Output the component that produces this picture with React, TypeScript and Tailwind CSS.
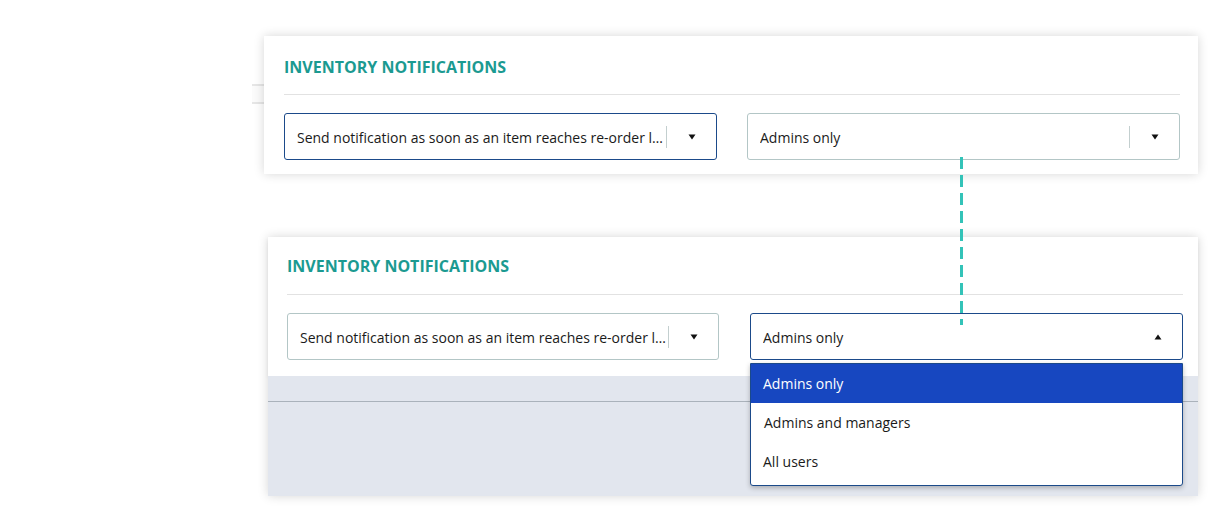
import React from "react";

function Arrow({ up = false }: { up?: boolean }) {
  return (
    <svg width="8" height="6" viewBox="0 0 8 6" className="block">
      {up ? <path d="M4 0.5 L7.5 5.5 L0.5 5.5 Z" fill="#111" /> : <path d="M0.5 0.5 L7.5 0.5 L4 5.5 Z" fill="#111" />}
    </svg>
  );
}

function Select({
  text,
  active = false,
  open = false,
  separator = true,
}: {
  text: string;
  active?: boolean;
  open?: boolean;
  separator?: boolean;
}) {
  return (
    <div
      className={`flex h-[47px] items-center rounded-[3px] border bg-white pl-[12px] ${
        active ? "border-[#1b4a8a]" : "border-[#b3c6c6]"
      }`}
    >
      <span className="min-w-0 flex-1 truncate pt-[2px] text-[14px] leading-[20px] text-[#1a1a1a]">{text}</span>
      <div className="flex w-[50px] shrink-0 items-center">
        <div className={`h-[22px] w-px ${separator ? "bg-[#c3cfcf]" : "bg-transparent"}`} />
        <div className="flex flex-1 justify-center pl-[1px] pt-[1px]">
          <Arrow up={open} />
        </div>
      </div>
    </div>
  );
}

export default function App() {
  const longText = "Send notification as soon as an item reaches re-order level";
  return (
    <div
      className="relative h-[510px] w-[1212px] overflow-hidden bg-white"
      style={{ fontFamily: '"Open Sans", "Noto Sans", sans-serif' }}
    >
      {/* faint background element behind card 1 */}
      <div className="absolute left-[252px] top-[84px] z-0 h-[20px] w-[14px] border-y-2 border-[#e6e6e6] bg-[#fbfbfb]" />

      {/* Card 1 */}
      <div className="relative z-10 ml-[264px] mt-[36px] w-[934px] bg-white pb-[14px] pl-[20px] pr-[18px] pt-[20px] shadow-[0_0_10px_rgba(0,0,0,0.16)]">
        <h2 className="text-[16px] font-bold leading-[22px] text-[#1b9a91]">INVENTORY NOTIFICATIONS</h2>
        <div className="mt-[16px] h-px bg-[#e2e2e2]" />
        <div className="mt-[18px] grid grid-cols-2 gap-[30px]">
          <Select text={longText} active />
          <Select text="Admins only" />
        </div>
      </div>

      {/* Card 2 */}
      <div className="relative z-10 ml-[268px] mt-[63px] w-[930px] shadow-[0_0_10px_rgba(0,0,0,0.16)]">
        <div className="bg-white pb-[16px] pl-[19px] pr-[15px] pt-[18px] shadow-[0_2px_4px_rgba(0,0,0,0.06)]">
          <h2 className="text-[16px] font-bold leading-[22px] text-[#1b9a91]">INVENTORY NOTIFICATIONS</h2>
          <div className="mt-[17px] h-px bg-[#e2e2e2]" />
          <div className="mt-[18px] grid grid-cols-[432px_433px] gap-[31px]">
            <Select text={longText} />
            <Select text="Admins only" active open separator={false} />
          </div>
        </div>
        <div className="h-[120px] bg-[#e2e6ee] pt-[25px]">
          <div className="h-px bg-[#aab2bb]" />
        </div>
      </div>

      {/* Open dropdown list */}
      <div className="absolute left-[750px] top-[363px] z-20 w-[433px] overflow-hidden rounded-b-[3px] border border-[#1b4a8a] bg-white shadow-[0_2px_5px_rgba(0,0,0,0.25)]">
        <div className="flex h-[39px] items-center bg-[#1747c0] px-[12px] text-[14px] text-white">Admins only</div>
        <div className="flex h-[39px] items-center px-[13px] text-[14px] text-[#1a1a1a]">Admins and managers</div>
        <div className="flex h-[39px] items-center px-[12px] text-[14px] text-[#1a1a1a]">All users</div>
        <div className="h-[4px]" />
      </div>

      {/* Dashed connector */}
      <div className="absolute left-[960px] top-[157px] z-30 h-[168px] w-[3px] bg-[repeating-linear-gradient(to_bottom,#33c3b8_0px,#33c3b8_12px,transparent_12px,transparent_18px)]" />
    </div>
  );
}
